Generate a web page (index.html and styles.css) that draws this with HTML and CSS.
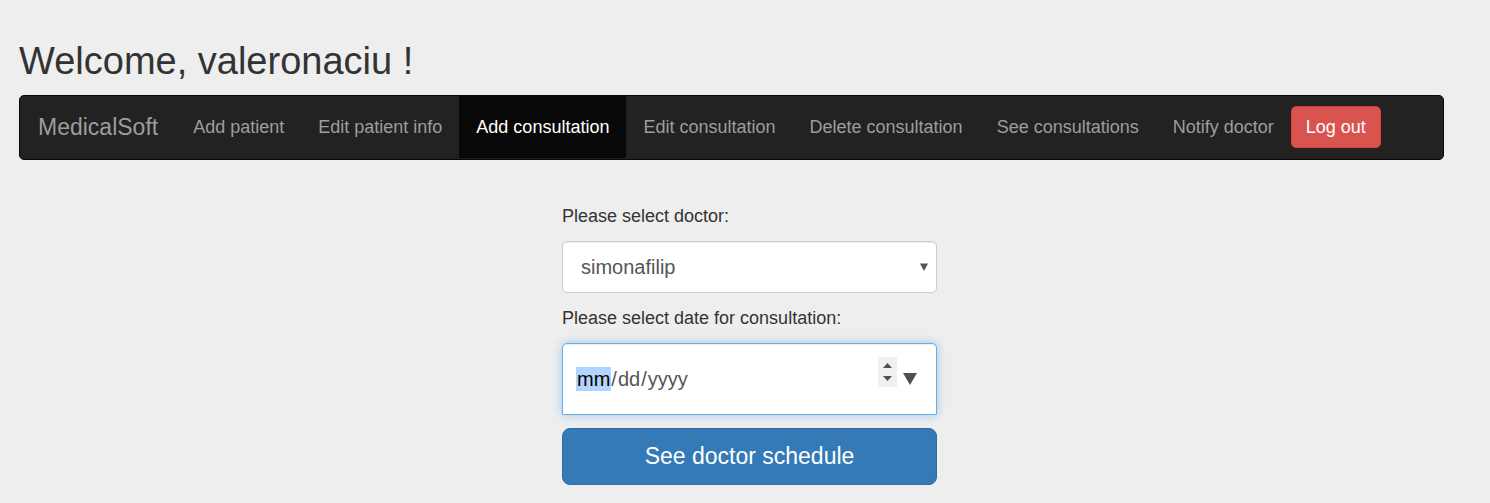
FILE: index.html
```html
<!DOCTYPE html>
<html lang="en-US">
<head>
<meta charset="utf-8">
<meta name="viewport" content="width=device-width, initial-scale=1">
<title>MedicalSoft</title>
<link rel="stylesheet" href="styles.css">
</head>
<body class="page">
<h2 class="welcome">Welcome, valeronaciu !</h2>
<nav class="navbar">
  <a class="brand" href="#">MedicalSoft</a>
  <ul class="nav-list">
    <li><a class="nav-link" href="#">Add patient</a></li>
    <li><a class="nav-link" href="#">Edit patient info</a></li>
    <li><a class="nav-link active" href="#" aria-current="page">Add consultation</a></li>
    <li><a class="nav-link" href="#">Edit consultation</a></li>
    <li><a class="nav-link" href="#">Delete consultation</a></li>
    <li><a class="nav-link" href="#">See consultations</a></li>
    <li><a class="nav-link" href="#">Notify doctor</a></li>
  </ul>
  <button class="logout" type="button">Log out</button>
</nav>
<main class="content">
  <form class="schedule-form">
    <label class="label" for="doctor">Please select doctor:</label>
    <div class="select-wrap">
      <select class="select" id="doctor">
        <option>simonafilip</option>
      </select>
      <svg class="select-arrow" width="8" height="8" viewBox="0 0 8 8" aria-hidden="true"><path d="M0 0.5h8L4 8z"/></svg>
    </div>
    <label class="label" for="date">Please select date for consultation:</label>
    <div class="date-box">
      <input class="date-input" id="date" type="date">
      <div class="spinner">
        <button class="spin" type="button" aria-label="Increase"><svg width="9" height="5" viewBox="0 0 9 5"><path d="M0 5L4.5 0L9 5z"/></svg></button>
        <button class="spin" type="button" aria-label="Decrease"><svg width="9" height="5" viewBox="0 0 9 5"><path d="M0 0h9L4.5 5z"/></svg></button>
      </div>
      <button class="open-picker" type="button" aria-label="Open calendar"><svg width="14" height="12" viewBox="0 0 14 12"><path d="M0 0h14L7 12z"/></svg></button>
    </div>
    <button class="submit" type="submit">See doctor schedule</button>
  </form>
</main>
</body>
</html>
```

FILE: styles.css
```css
* {
  box-sizing: border-box;
}

.page {
  margin: 0;
  padding: 40px 46px 18px 19px;
  background: #eee;
  color: #333;
  font-family: "Liberation Sans", Arial, sans-serif;
  font-size: 18px;
  line-height: 24px;
}

button,
select,
input {
  font-family: inherit;
}

.welcome {
  margin: 0 0 13px;
  font-size: 38px;
  font-weight: 400;
  line-height: 42px;
}

.navbar {
  display: flex;
  align-items: flex-start;
  min-height: 65px;
  border: 1px solid #080808;
  border-radius: 5px;
  background: #222;
}

.brand {
  padding: 19px 18px;
  color: #9d9d9d;
  font-size: 23px;
  text-decoration: none;
}

.nav-list {
  display: flex;
  margin: 0;
  padding: 0;
  list-style: none;
}

.nav-link {
  display: block;
  padding: 19px 17px;
  color: #9d9d9d;
  text-decoration: none;
  white-space: nowrap;
}

.nav-link.active {
  background: #080808;
  color: #fff;
}

.logout {
  height: 42px;
  margin-top: 10px;
  padding: 0 14px;
  border: 1px solid #d43f3a;
  border-radius: 5px;
  background: #d9534f;
  color: #fff;
  font-size: 18px;
  white-space: nowrap;
}

.content {
  display: flex;
  justify-content: center;
  padding: 44px 0 0 36px;
}

.schedule-form {
  display: flex;
  flex-direction: column;
  gap: 13px;
  width: 100%;
  max-width: 375px;
}

.select-wrap {
  position: relative;
}

.select {
  display: block;
  width: 100%;
  height: 52px;
  padding: 0 32px 0 18px;
  border: 1px solid #ccc;
  border-radius: 5px;
  appearance: none;
  background: #fff;
  box-shadow: inset 0 1px 1px rgba(0, 0, 0, 0.075);
  color: #555;
  font-size: 20px;
}

.select-arrow {
  position: absolute;
  top: 22px;
  right: 9px;
  fill: #555;
  pointer-events: none;
}

.date-box {
  display: flex;
  align-items: center;
  height: 72px;
  padding: 0 19px 0 13px;
  border: 1px solid #66afe9;
  border-radius: 5px 5px 0 0;
  background: #fff;
  box-shadow: inset 0 1px 1px rgba(0, 0, 0, 0.075), 0 0 10px rgba(102, 175, 233, 0.6);
}

.date-input {
  flex: 1;
  min-width: 0;
  padding: 0;
  border: 0;
  outline: 0;
  background: transparent;
  color: #555;
  font-size: 20px;
  line-height: 24px;
}

.date-input::-webkit-calendar-picker-indicator {
  display: none;
}

.date-input::-webkit-datetime-edit-month-field {
  background: #b3d4fd;
  color: #000;
}

.spinner {
  display: flex;
  flex-direction: column;
  align-self: flex-start;
  justify-content: center;
  gap: 8px;
  width: 19px;
  height: 30px;
  margin: 13px 6px 0 0;
  background: #f0f0f0;
}

.spin,
.open-picker {
  display: flex;
  justify-content: center;
  padding: 0;
  border: 0;
  background: transparent;
  fill: #505050;
}

.submit {
  height: 57px;
  border: 1px solid #2e6da4;
  border-radius: 8px;
  background: #337ab7;
  color: #fff;
  font-size: 23px;
}
```
